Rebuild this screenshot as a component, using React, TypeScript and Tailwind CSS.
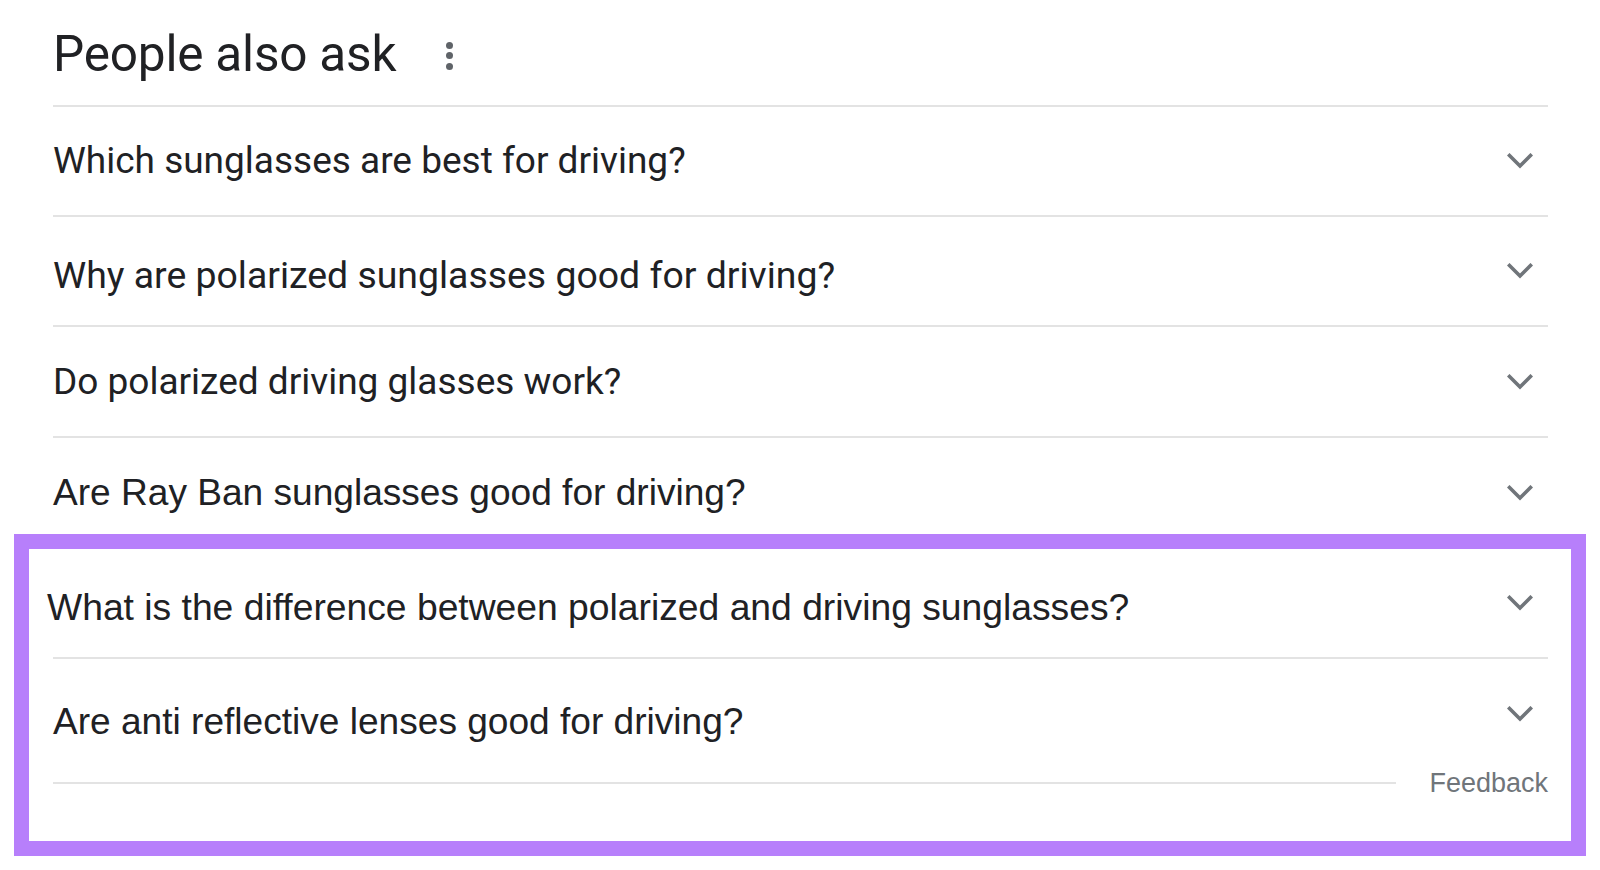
import React from 'react'

// "People also ask" block with the last two questions framed in purple

const roboto = "font-['Roboto',_'Liberation_Sans',_sans-serif]"
const arial = "font-['Liberation_Sans',_Arial,_sans-serif]"

function Chevron({ className = '' }: { className?: string }) {
  return (
    <svg
      width="26"
      height="16"
      viewBox="0 0 26 16"
      className={`shrink-0 mr-[15px] ${className}`}
      fill="none"
      stroke="#70757a"
      strokeWidth="3.6"
      strokeLinecap="square"
    >
      <path d="M2.5 2.5 L13 13 L23.5 2.5" />
    </svg>
  )
}

function Row({
  q,
  className = '',
  textClass = '',
  chevClass = '',
  line = true,
}: {
  q: string
  className?: string
  textClass?: string
  chevClass?: string
  line?: boolean
}) {
  return (
    <div
      className={`flex items-center justify-between ${line ? 'border-b-2 border-[#e3e3e3]' : ''} ${className}`}
    >
      <span className={`text-[#202124] whitespace-nowrap ${textClass}`}>{q}</span>
      <Chevron className={chevClass} />
    </div>
  )
}

export default function App() {
  return (
    <div className="w-[1600px] h-[870px] bg-white overflow-hidden">
      {/* ── Lista principal ── */}
      <div className="ml-[53px] w-[1495px] flex flex-col">
        <div className="h-[107px] flex items-center gap-[50px] border-b-2 border-[#e3e3e3] pt-[4px]">
          <h1 className={`${roboto} text-[49.5px] leading-none text-[#202124] tracking-[-0.2px]`}>
            People also ask
          </h1>
          <div className="flex flex-col gap-[3.5px] mt-[2px]">
            <span className="w-[7px] h-[7px] rounded-full bg-[#5f6368]" />
            <span className="w-[7px] h-[7px] rounded-full bg-[#5f6368]" />
            <span className="w-[7px] h-[7px] rounded-full bg-[#5f6368]" />
          </div>
        </div>

        <Row
          q="Which sunglasses are best for driving?"
          className="h-[110px]"
          textClass={`${roboto} text-[37px]`}
        />
        <Row
          q="Why are polarized sunglasses good for driving?"
          className="h-[110px]"
          textClass={`${roboto} text-[37.4px] mt-[8px]`}
        />
        <Row
          q="Do polarized driving glasses work?"
          className="h-[111px]"
          textClass={`${roboto} text-[37px]`}
        />
        <Row
          q="Are Ray Ban sunglasses good for driving?"
          className="h-[96px] pt-[14px]"
          textClass={`${arial} text-[37.1px]`}
          line={false}
        />
      </div>

      {/* ── Destaque roxo ── */}
      <div className="ml-[14px] w-[1572px] h-[322px] border-[15px] border-[#b77ffb] pl-[24px] pr-[23px] flex flex-col">
        <Row
          q="What is the difference between polarized and driving sunglasses?"
          className="h-[110px]"
          textClass={`${arial} text-[37.25px] -ml-[6px] mt-[9px]`}
        />
        <Row
          q="Are anti reflective lenses good for driving?"
          className="h-[110px]"
          textClass={`${arial} text-[37.1px] mt-[15px]`}
          line={false}
        />
        <div className="h-[32px] flex items-center gap-[33px] -mt-[2px]">
          <div className="flex-1 h-[2px] bg-[#e3e3e3]" />
          <span className={`${arial} text-[27px] leading-none text-[#70757a]`}>Feedback</span>
        </div>
      </div>
    </div>
  )
}
